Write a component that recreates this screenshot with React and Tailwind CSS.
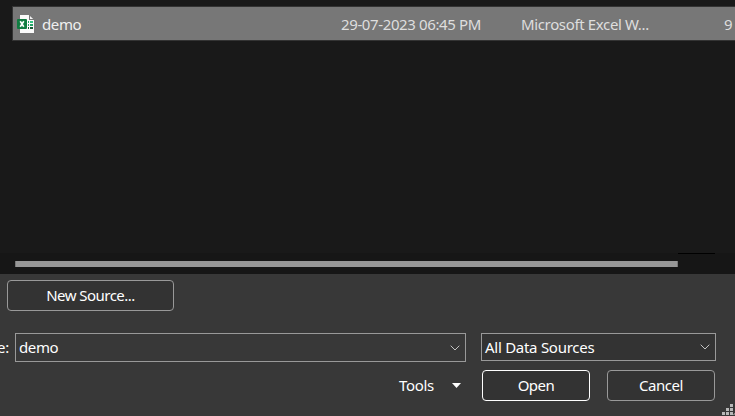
function ExcelIcon() {
  return (
    <svg className="block h-[18px] w-[17px] shrink-0" viewBox="0 0 17 18" shapeRendering="crispEdges">
      <path d="M3 0h9v5h5v13H3z" fill="#fbfbfb" />
      <path d="M13 1l3.2 3H13z" fill="#f4f4f4" shapeRendering="auto" />
      <path d="M11 6h1v2h-1zM11 9h1v2h-1z" fill="#21a366" />
      <path d="M13 6h3v2h-3z" fill="#33c481" />
      <path d="M13 9h3v2h-3z" fill="#21a366" />
      <path d="M11 12h1v2h-1zM13 12h3v2h-3z" fill="#185c37" />
      <rect x="0" y="4" width="10" height="10" rx="1" fill="#107c41" shapeRendering="auto" />
      <path d="M3.2 6.2l3.6 5.6M6.8 6.2l-3.6 5.6" stroke="#fff" strokeWidth="1.6" shapeRendering="auto" />
    </svg>
  );
}

function Chevron() {
  return (
    <svg className="block h-[6px] w-[10px] shrink-0" viewBox="0 0 10 6" fill="none">
      <path d="M.7.7L5 5 9.3.7" stroke="#c4c4c4" strokeWidth="1" />
    </svg>
  );
}

function ResizeGrip() {
  return (
    <svg className="block h-[11px] w-[13px]" viewBox="0 0 13 11" fill="#b8b8b8" shapeRendering="crispEdges">
      <path d="M8 0h3v3H8zM4 4h3v3H4zM8 4h3v3H8zM0 8h3v3H0zM4 8h3v3H4zM8 8h3v3H8z" />
      <path d="M13 8v3h-2z" fill="#858585" />
    </svg>
  );
}

export default function App() {
  return (
    <div className="flex h-[416px] w-[735px] flex-col overflow-hidden bg-[#383838] font-['Noto_Sans','Open_Sans',sans-serif] text-[15px] leading-5 whitespace-nowrap text-white">
      <section className="flex h-[274px] shrink-0 flex-col bg-[#191919]">
        <div className="mt-1.5 ml-3 flex h-[35px] shrink-0 items-center border border-r-0 border-[#333] bg-[#777] pl-1 text-[#dedede]">
          <ExcelIcon />
          <span className="ml-2 w-[299px] tracking-[-0.4px] text-[#f0f0f0]">demo</span>
          <span className="w-[180px] tracking-[-0.38px]">29-07-2023 06:45 PM</span>
          <span className="w-[203px] tracking-[-0.36px]">Microsoft Excel W...</span>
          <span>9</span>
        </div>
        <div className="mt-auto h-[21px] bg-[#161616]">
          <div className="ml-[678px] h-px w-[37px] bg-black" />
          <div className="mt-[7px] ml-[15px] h-1.5 w-[663px] border-x border-[#777] bg-[#979797]" />
        </div>
      </section>

      <button className="mt-1.5 ml-[7px] flex h-[31px] w-[167px] shrink-0 items-center justify-center rounded-[4px] border border-[#999] bg-[#333] pb-0.5 tracking-[-0.53px]">
        New Source...
      </button>

      <div className="mt-[22px] flex h-[29px] shrink-0 items-start">
        <span className="flex h-[29px] w-[15px] items-center pb-0.5">
          <span className="-ml-[3px] tracking-[-0.3px]">e:</span>
        </span>
        <div className="flex h-[29px] w-[451px] items-center justify-between border border-[#999] bg-[#383838] pr-[5px] pl-[3px]">
          <span className="pb-0.5 tracking-[-0.4px]">demo</span>
          <Chevron />
        </div>
        <div className="ml-[15px] flex h-7 w-[235px] items-center justify-between border border-[#999] bg-[#333] pr-[5px] pl-[3px]">
          <span className="tracking-[-0.27px]">All Data Sources</span>
          <Chevron />
        </div>
      </div>

      <div className="mt-2 flex h-[31px] shrink-0 items-center pl-[399px]">
        <span className="w-[53px] pb-0.5 tracking-[-0.3px]">Tools</span>
        <svg className="block h-[5px] w-[9px]" viewBox="0 0 9 5" fill="#fff">
          <path d="M0 0h9L4.5 5z" />
        </svg>
        <button className="ml-[21px] flex h-[31px] w-[108px] items-center justify-center rounded-[4px] border border-white bg-[#333] pb-0.5 tracking-[-0.5px]">
          Open
        </button>
        <button className="ml-[17px] flex h-[31px] w-[108px] items-center justify-center rounded-[4px] border border-[#999] bg-[#333] pb-0.5 tracking-[-0.45px]">
          Cancel
        </button>
      </div>
      <div className="mt-auto flex shrink-0 justify-end pb-px">
        <ResizeGrip />
      </div>
    </div>
  );
}
